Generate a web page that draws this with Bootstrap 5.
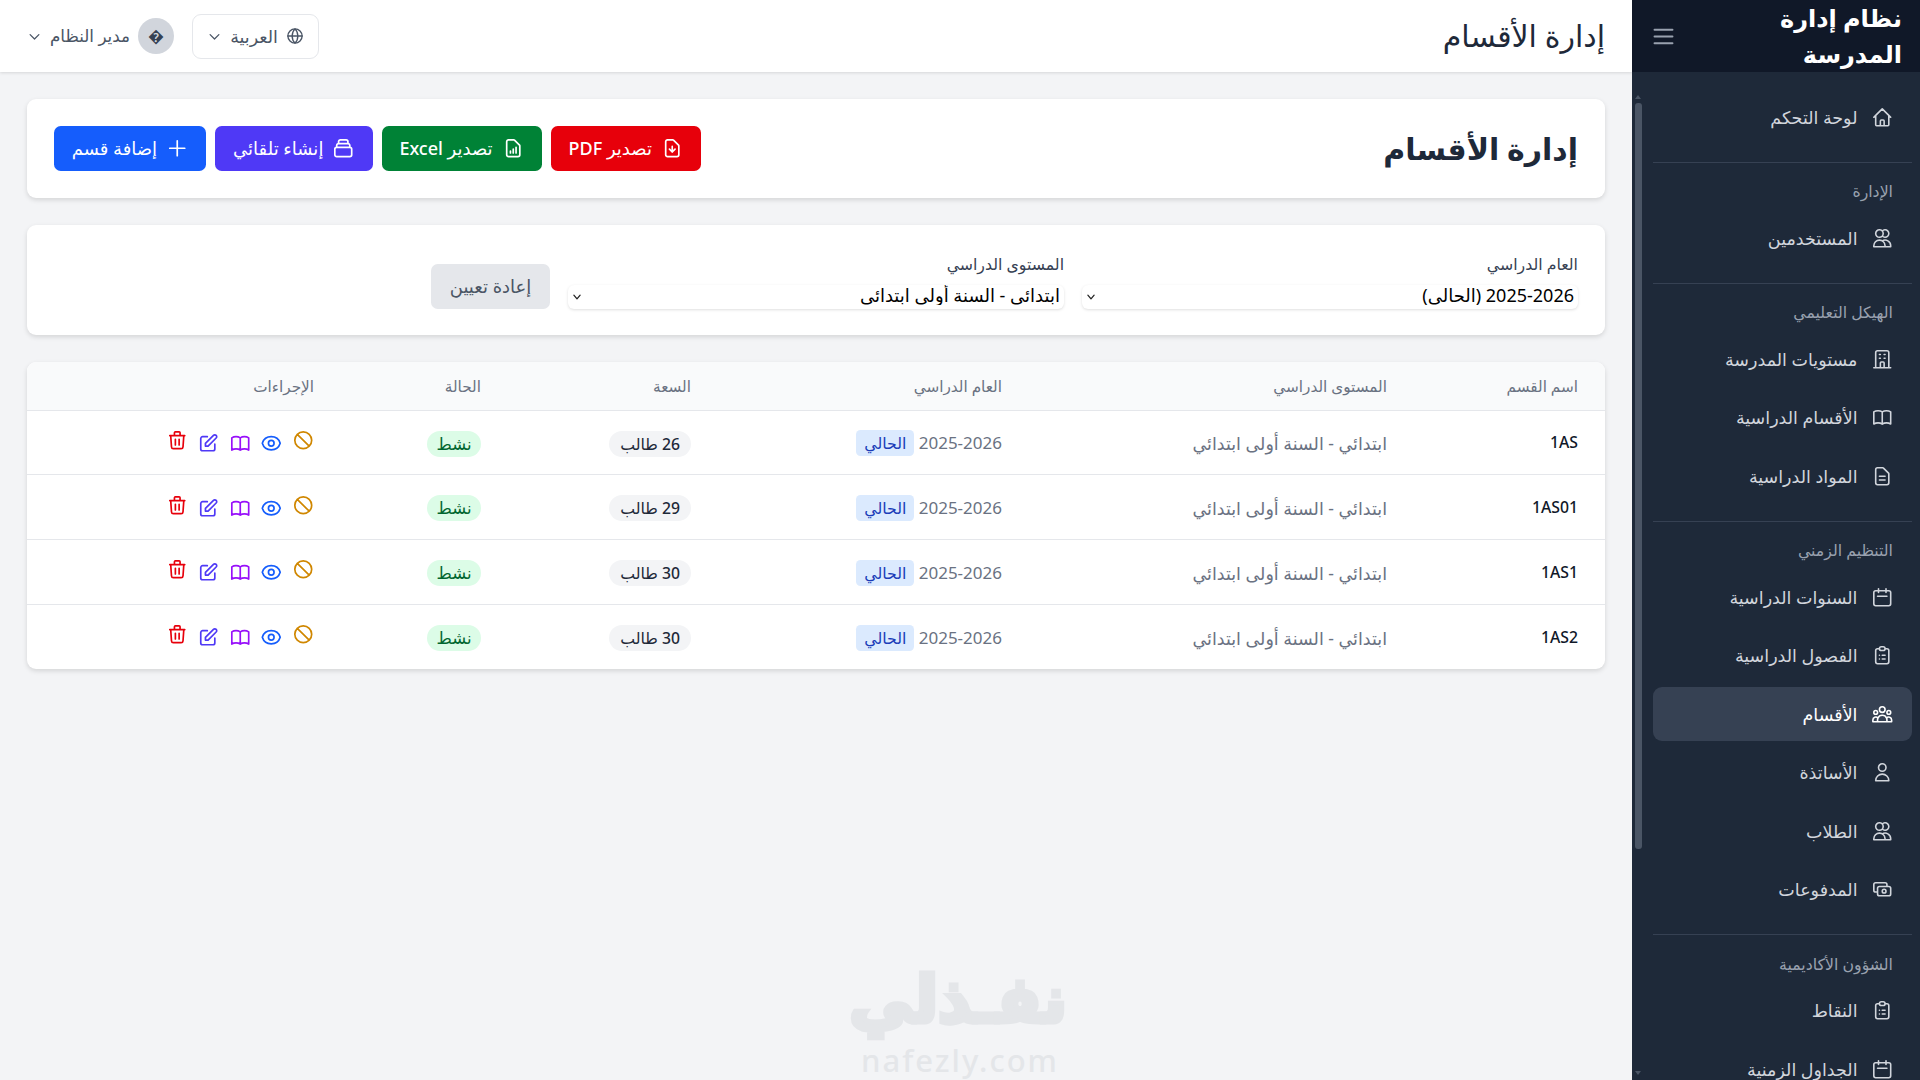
<!DOCTYPE html>
<html lang="ar" dir="rtl">
<head>
  <meta charset="UTF-8" />
  <title>إدارة الأقسام</title>
  <link href="https://cdn.jsdelivr.net/npm/bootstrap@5.3.0/dist/css/bootstrap.min.css" rel="stylesheet" />
  <style>
    body { background: #f3f4f6; font-family: "Noto Sans", "DejaVu Sans", sans-serif; font-size: 18px; color: #1e2939; height: 100vh; overflow: hidden; }
    svg.ico { fill: none; stroke: currentColor; stroke-width: 1.8; stroke-linecap: round; stroke-linejoin: round; flex: none; width: 22.5px; height: 22.5px; }
    svg.chev { width: 15px; height: 15px; stroke-width: 2; }
    svg.globe { width: 18px; height: 18px; }
    .side-bar { width: 288px; height: 100vh; background: #1e2939; flex: none; }
    .side-brand { height: 72px; background: #101828; padding: 0 18px 0 0; overflow: hidden; }
    .side-brand h2 { font-size: 24px; font-weight: 700; line-height: 36px; color: #fff; margin: 0; width: 150px; }
    .side-toggle { color: #99a1af; margin-left: 18px; margin-right: auto; }
    .side-toggle svg.ico { width: 27px; height: 27px; stroke-width: 1.7; }
    .side-scroll { padding: 18px 8px 0 0; margin-left: 21px; }
    .side-link { height: 54px; padding: 0 19px 0 18px; gap: 13px; margin-bottom: 4.5px; color: #d1d5dc; font-size: 17.5px; font-weight: 500; border-radius: 9px; text-decoration: none; }
    .side-link svg.ico { stroke-width: 1.7; }
    .side-link.on { background: #364153; color: #fff; }
    .side-rule { border-top: 1px solid #364153; margin: 17.5px 0 7px 0; }
    .side-cap { font-size: 15.75px; line-height: 24px; color: #99a1af; padding: 9.5px 19px 0 0; margin-bottom: 8px; font-weight: 500; }
    .fake-bar { position: absolute; top: 94px; right: 278px; width: 7px; height: 984px; }
    .fake-thumb { position: absolute; top: 9px; height: 746px; left: 0; right: 0; background: #4a5565; border-radius: 3px; }
    .fake-up, .fake-down { position: absolute; left: 0; border-left: 3.5px solid transparent; border-right: 3.5px solid transparent; }
    .fake-up { top: 1px; border-bottom: 4px solid #4a5565; }
    .fake-down { bottom: 3px; border-top: 4px solid #4a5565; }
    .top-head { height: 72px; background: #fff; padding: 0 27px; box-shadow: 0 1px 3px rgba(0,0,0,.12); }
    .top-head h1 { font-size: 30px; font-weight: 500; margin: 0; color: #1e2939; }
    .lang-btn { height: 45px; width: 127px; background: #fff; border: 1px solid #e5e7eb; border-radius: 9px; color: #4a5565; font-size: 17.5px; margin-left: 18px; font-weight: 500; padding: 0 14px; }
    .user-btn { color: #4a5565; font-size: 16.75px; font-weight: 500; gap: 8px; }
    .user-ava { width: 36px; height: 36px; border-radius: 50%; background: #d1d5dc; color: #364153; font-size: 16px; }
    .panel { background: #fff; border-radius: 9px; box-shadow: 0 2px 5px rgba(0,0,0,.13); border: 0; }
    .page-wrap { padding: 27px; }
    .title-panel { height: 99px; padding: 0 27px; margin-bottom: 27px; }
    .title-panel h2 { font-size: 30px; font-weight: 700; margin: 0; color: #1e2939; }
    .act-row { gap: 9px; }
    .act-btn { height: 45px; border: 0; border-radius: 6.75px; color: #fff; font-size: 18px; font-weight: 500; padding: 0 17.75px; gap: 9px; }
    .c-red { background: #e7000b; } .c-green { background: #008236; } .c-indigo { background: #4f39f6; } .c-blue { background: #155dfc; }
    .filter-panel { height: 110px; padding: 27px; margin-bottom: 27px; }
    .filter-row { --bs-gutter-x: 18px; --bs-gutter-y: 0; height: 56px; }
    .filter-panel label { display: block; font-size: 15.75px; font-weight: 500; color: #364153; line-height: 24px; margin-bottom: 9px; }
    .plain-select { height: 24px; padding: 0 4px 4px 22px; border: 0; border-radius: 6px; box-shadow: 0 1px 3px rgba(0,0,0,.13); font-size: 18px; color: #000; line-height: 20px; font-family: inherit; background: #fff url("data:image/svg+xml,%3csvg xmlns='http://www.w3.org/2000/svg' viewBox='0 0 16 16'%3e%3cpath fill='none' stroke='%23222' stroke-width='2' stroke-linecap='round' stroke-linejoin='round' d='m3 5 5 6 5-6'/%3e%3c/svg%3e") no-repeat 4px 50% / 10px 10px; appearance: none; width: 100%; display: block; }
    .reset-btn { height: 45px; width: 119px; background: #e5e7eb; color: #4a5565; border: 0; border-radius: 6.75px; font-size: 18px; font-weight: 500; }
    .data-table { table-layout: fixed; width: 100%; margin: 0; }
    .data-table th { background: #f9fafb; height: 48px; padding: 1.5px 27px 0; font-size: 15.25px; font-weight: 500; color: #6a7282; text-align: right; vertical-align: middle; border-bottom: 1px solid #e5e7eb; }
    .data-table td { height: 64.75px; padding: 1.5px 27px 0; font-size: 17.5px; color: #6a7282; vertical-align: middle; border-bottom: 1px solid #e5e7eb; }
    .data-table tr:last-child td { border-bottom: 0; }
    .data-table td.sec-name { color: #101828; font-size: 15.75px; font-weight: 500; }
    .data-table td.act-cell { padding-right: 27px; }
    .w-a { width: 191px; } .w-b { width: 385px; } .w-c { width: 311px; } .w-d { width: 210px; } .w-e { width: 167px; } .w-f { width: 314px; }
    .data-table td.year-cell { font-size: 17px; }
    .tag-year { background: #dbeafe; color: #193cb8; font-size: 15.75px; line-height: 26px; height: 26px; width: 58px; border-radius: 4.5px; display: inline-block; text-align: center; font-weight: 500; }
    .tag-cap { background: #f3f4f6; color: #1e2939; font-size: 15.75px; line-height: 26px; height: 26px; padding: 0 11px; border-radius: 13px; display: inline-block; font-weight: 500; }
    .tag-on { background: #dcfce7; color: #016630; font-size: 16.5px; line-height: 26px; height: 26px; padding: 0 9.5px; border-radius: 13px; display: inline-block; font-weight: 500; }
    .row-acts { gap: 9px; }
    .row-acts .up { margin-top: -6px; }
    .t-ban { color: #d08700; } .t-eye { color: #155dfc; } .t-book { color: #9810fa; } .t-edit { color: #4f39f6; } .t-del { color: #e7000b; }
    .water-mark { position: absolute; left: 853px; top: 962px; width: 214px; text-align: center; color: #e4e6e9; pointer-events: none; }
    .water-ar { font-size: 64px; font-weight: 900; line-height: 72px; -webkit-text-stroke: 5px #e4e6e9; margin-bottom: 8px; }
    .water-en { font-size: 31px; font-weight: 500; line-height: 36px; letter-spacing: 2px; direction: ltr; }
  </style>
</head>
<body>
  <svg width="0" height="0" class="position-absolute">
    <symbol id="i-home" viewBox="0 0 24 24"><path d="M3 12l2-2m0 0l7-7 7 7M5 10v10a1 1 0 001 1h3m10-11l2 2m-2-2v10a1 1 0 01-1 1h-3m-6 0a1 1 0 001-1v-4a1 1 0 011-1h2a1 1 0 011 1v4a1 1 0 001 1m-6 0h6"/></symbol>
    <symbol id="i-users" viewBox="0 0 24 24"><path d="M12 4.354a4 4 0 110 5.292M15 21H3v-1a6 6 0 0112 0v1zm0 0h6v-1a6 6 0 00-9-5.197M13 7a4 4 0 11-8 0 4 4 0 018 0z"/></symbol>
    <symbol id="i-build" viewBox="0 0 24 24"><path d="M19 21V5a2 2 0 00-2-2H7a2 2 0 00-2 2v16m14 0h2m-2 0h-5m-9 0H3m2 0h5M9 7h1m-1 4h1m4-4h1m-1 4h1m-5 10v-5a1 1 0 011-1h2a1 1 0 011 1v5m-4 0h4"/></symbol>
    <symbol id="i-book" viewBox="0 0 24 24"><path d="M12 6.253v13m0-13C10.832 5.477 9.246 5 7.5 5S4.168 5.477 3 6.253v13C4.168 18.477 5.754 18 7.5 18s3.332.477 4.5 1.253m0-13C13.168 5.477 14.754 5 16.5 5c1.747 0 3.332.477 4.5 1.253v13C19.832 18.477 18.247 18 16.5 18c-1.746 0-3.332.477-4.5 1.253"/></symbol>
    <symbol id="i-doc" viewBox="0 0 24 24"><path d="M9 12h6m-6 4h6m2 5H7a2 2 0 01-2-2V5a2 2 0 012-2h5.586a1 1 0 01.707.293l5.414 5.414a1 1 0 01.293.707V19a2 2 0 01-2 2z"/></symbol>
    <symbol id="i-cal" viewBox="0 0 24 24"><path d="M8 7V3m8 4V3m-9 8h10M5 21h14a2 2 0 002-2V7a2 2 0 00-2-2H5a2 2 0 00-2 2v12a2 2 0 002 2z"/></symbol>
    <symbol id="i-clip" viewBox="0 0 24 24"><path d="M9 5H7a2 2 0 00-2 2v12a2 2 0 002 2h10a2 2 0 002-2V7a2 2 0 00-2-2h-2M9 5a2 2 0 002 2h2a2 2 0 002-2M9 5a2 2 0 012-2h2a2 2 0 012 2m-3 7h3m-3 4h3m-6-4h.01M9 16h.01"/></symbol>
    <symbol id="i-group" viewBox="0 0 24 24"><path d="M17 20h5v-2a3 3 0 00-5.356-1.857M17 20H7m10 0v-2c0-.656-.126-1.283-.356-1.857M7 20H2v-2a3 3 0 015.356-1.857M7 20v-2c0-.656.126-1.283.356-1.857m0 0a5.002 5.002 0 019.288 0M15 7a3 3 0 11-6 0 3 3 0 016 0zm6 3a2 2 0 11-4 0 2 2 0 014 0zM7 10a2 2 0 11-4 0 2 2 0 014 0z"/></symbol>
    <symbol id="i-user" viewBox="0 0 24 24"><path d="M16 7a4 4 0 11-8 0 4 4 0 018 0zM12 14a7 7 0 00-7 7h14a7 7 0 00-7-7z"/></symbol>
    <symbol id="i-cash" viewBox="0 0 24 24"><path d="M17 9V7a2 2 0 00-2-2H5a2 2 0 00-2 2v6a2 2 0 002 2h2m2 4h10a2 2 0 002-2v-6a2 2 0 00-2-2H9a2 2 0 00-2 2v6a2 2 0 002 2zm7-5a2 2 0 11-4 0 2 2 0 014 0z"/></symbol>
    <symbol id="i-menu" viewBox="0 0 24 24"><path d="M4 6h16M4 12h16M4 18h16"/></symbol>
    <symbol id="i-chev" viewBox="0 0 24 24"><path d="M19 9l-7 7-7-7"/></symbol>
    <symbol id="i-globe" viewBox="0 0 24 24"><circle cx="12" cy="12" r="9.500"/><path d="M2.500 12h19M12 2.500c2.500 2.500 3.800 5.800 3.800 9.500s-1.300 7-3.800 9.500c-2.500-2.500-3.800-5.800-3.800-9.500s1.300-7 3.800-9.500z"/></symbol>
    <symbol id="i-plus" viewBox="0 0 24 24"><path d="M12 4v16m8-8H4"/></symbol>
    <symbol id="i-pdf" viewBox="0 0 24 24"><path d="M12 10v6m0 0l-3-3m3 3l3-3m2 8H7a2 2 0 01-2-2V5a2 2 0 012-2h5.586a1 1 0 01.707.293l5.414 5.414a1 1 0 01.293.707V19a2 2 0 01-2 2z"/></symbol>
    <symbol id="i-xls" viewBox="0 0 24 24"><path d="M9 17v-2m3 2v-4m3 4v-6m2 10H7a2 2 0 01-2-2V5a2 2 0 012-2h5.586a1 1 0 01.707.293l5.414 5.414a1 1 0 01.293.707V19a2 2 0 01-2 2z"/></symbol>
    <symbol id="i-auto" viewBox="0 0 24 24"><path d="M19 11H5m14 0a2 2 0 012 2v6a2 2 0 01-2 2H5a2 2 0 01-2-2v-6a2 2 0 012-2m14 0V9a2 2 0 00-2-2M5 11V9a2 2 0 012-2m0 0V5a2 2 0 012-2h6a2 2 0 012 2v2M7 7h10"/></symbol>
    <symbol id="i-edit" viewBox="0 0 24 24"><path d="M11 5H6a2 2 0 00-2 2v11a2 2 0 002 2h11a2 2 0 002-2v-5m-1.414-9.414a2 2 0 112.828 2.828L11.828 15H9v-2.828l8.586-8.586z"/></symbol>
    <symbol id="i-eye" viewBox="0 0 24 24"><path d="M15 12a3 3 0 11-6 0 3 3 0 016 0z"/><path d="M2.458 12C3.732 7.943 7.523 5 12 5c4.478 0 8.268 2.943 9.542 7-1.274 4.057-5.064 7-9.542 7-4.477 0-8.268-2.943-9.542-7z"/></symbol>
    <symbol id="i-ban" viewBox="0 0 24 24"><path d="M18.364 18.364A9 9 0 005.636 5.636m12.728 12.728A9 9 0 015.636 5.636m12.728 12.728L5.636 5.636"/></symbol>
    <symbol id="i-trash" viewBox="0 0 24 24"><path d="M19 7l-.867 12.142A2 2 0 0116.138 21H7.862a2 2 0 01-1.995-1.858L5 7m5 4v6m4-6v6m1-10V4a1 1 0 00-1-1h-4a1 1 0 00-1 1v3M4 7h16"/></symbol>
  </svg>

  <div class="d-flex position-relative">
    <!-- sidebar -->
    <aside class="side-bar overflow-hidden">
      <div class="side-brand d-flex align-items-center">
        <h2>نظام إدارة المدرسة</h2>
        <span class="side-toggle"><svg class="ico"><use href="#i-menu"/></svg></span>
      </div>
      <div class="side-scroll" id="sideNav"></div>
    </aside>
    <div class="fake-bar"><div class="fake-up"></div><div class="fake-thumb"></div><div class="fake-down"></div></div>

    <!-- main -->
    <div class="flex-grow-1">
      <header class="top-head d-flex align-items-center justify-content-between">
        <h1>إدارة الأقسام</h1>
        <div class="d-flex align-items-center">
          <button class="lang-btn d-flex align-items-center justify-content-between">
            <svg class="ico globe"><use href="#i-globe"/></svg>
            <span>العربية</span>
            <svg class="ico chev"><use href="#i-chev"/></svg>
          </button>
          <div class="user-btn d-flex align-items-center">
            <span class="user-ava d-flex align-items-center justify-content-center">�</span>
            <span>مدير النظام</span>
            <svg class="ico chev"><use href="#i-chev"/></svg>
          </div>
        </div>
      </header>

      <main class="page-wrap">
        <div class="panel title-panel d-flex align-items-center justify-content-between">
          <h2>إدارة الأقسام</h2>
          <div class="d-flex act-row">
            <button class="act-btn c-red d-flex align-items-center"><svg class="ico"><use href="#i-pdf"/></svg>تصدير PDF</button>
            <button class="act-btn c-green d-flex align-items-center"><svg class="ico"><use href="#i-xls"/></svg>تصدير Excel</button>
            <button class="act-btn c-indigo d-flex align-items-center"><svg class="ico"><use href="#i-auto"/></svg>إنشاء تلقائي</button>
            <button class="act-btn c-blue d-flex align-items-center"><svg class="ico"><use href="#i-plus"/></svg>إضافة قسم</button>
          </div>
        </div>

        <div class="panel filter-panel">
          <div class="row filter-row">
            <div class="col-4">
              <label>العام الدراسي</label>
              <select class="plain-select"><option>2025-2026 (الحالي)</option></select>
            </div>
            <div class="col-4">
              <label>المستوى الدراسي</label>
              <select class="plain-select"><option>ابتدائي - السنة أولى ابتدائي</option></select>
            </div>
            <div class="col-4 d-flex align-items-end">
              <button class="reset-btn">إعادة تعيين</button>
            </div>
          </div>
        </div>

        <div class="panel overflow-hidden">
          <table class="data-table">
            <colgroup><col class="w-a"><col class="w-b"><col class="w-c"><col class="w-d"><col class="w-e"><col class="w-f"></colgroup>
            <thead>
              <tr><th>اسم القسم</th><th>المستوى الدراسي</th><th>العام الدراسي</th><th>السعة</th><th>الحالة</th><th>الإجراءات</th></tr>
            </thead>
            <tbody id="rows"></tbody>
          </table>
        </div>
      </main>
    </div>

    <div class="water-mark">
      <div class="water-ar">نفـذلي</div>
      <div class="water-en">nafezly.com</div>
    </div>
  </div>

  <script>
    const nav = [
      ["link", "i-home", "لوحة التحكم"],
      ["rule"], ["cap", "الإدارة"],
      ["link", "i-users", "المستخدمين"],
      ["rule"], ["cap", "الهيكل التعليمي"],
      ["link", "i-build", "مستويات المدرسة"],
      ["link", "i-book", "الأقسام الدراسية"],
      ["link", "i-doc", "المواد الدراسية"],
      ["rule"], ["cap", "التنظيم الزمني"],
      ["link", "i-cal", "السنوات الدراسية"],
      ["link", "i-clip", "الفصول الدراسية"],
      ["on", "i-group", "الأقسام"],
      ["link", "i-user", "الأساتذة"],
      ["link", "i-users", "الطلاب"],
      ["link", "i-cash", "المدفوعات"],
      ["rule"], ["cap", "الشؤون الأكاديمية"],
      ["link", "i-clip", "النقاط"],
      ["link", "i-cal", "الجداول الزمنية"]
    ];
    document.getElementById("sideNav").innerHTML = nav.map(n => {
      if (n[0] === "rule") return `<div class="side-rule"></div>`;
      if (n[0] === "cap") return `<div class="side-cap">${n[1]}</div>`;
      return `<a href="#" class="side-link d-flex align-items-center ${n[0] === "on" ? "on" : ""}"><svg class="ico"><use href="#${n[1]}"/></svg><span>${n[2]}</span></a>`;
    }).join("");

    const rows = [["1AS", 26], ["1AS01", 29], ["1AS1", 30], ["1AS2", 30]];
    const ico = (id, cls) => `<svg class="ico ${cls}"><use href="#${id}"/></svg>`;
    document.getElementById("rows").innerHTML = rows.map(r => `
      <tr>
        <td class="sec-name">${r[0]}</td>
        <td>ابتدائي - السنة أولى ابتدائي</td>
        <td class="year-cell">2025-2026 <span class="tag-year">الحالي</span></td>
        <td><span class="tag-cap">${r[1]} طالب</span></td>
        <td><span class="tag-on">نشط</span></td>
        <td class="act-cell"><div class="row-acts d-flex align-items-center">
          ${ico("i-ban", "t-ban up")}${ico("i-eye", "t-eye")}${ico("i-book", "t-book")}${ico("i-edit", "t-edit")}${ico("i-trash", "t-del up")}
        </div></td>
      </tr>`).join("");
  </script>
  <script src="https://cdn.jsdelivr.net/npm/bootstrap@5.3.0/dist/js/bootstrap.bundle.min.js"></script>
</body>
</html>
